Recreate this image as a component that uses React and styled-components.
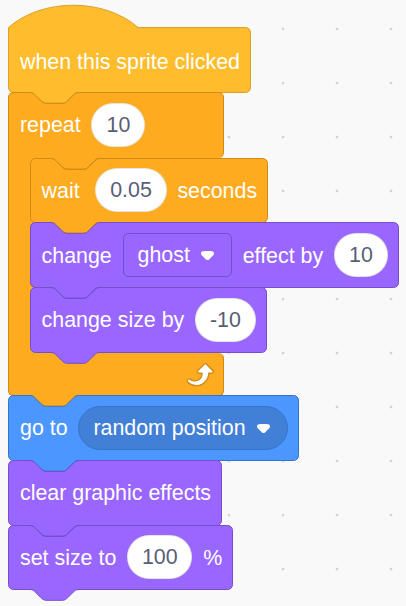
import styled, { createGlobalStyle } from "styled-components";

// scratch units -> px at this zoom
const S = 1.35;
const n = (v) => +(v * S).toFixed(2);

const COLORS = {
  events: { primary: "#FFBD2E", secondary: "#E6AC00", tertiary: "#D9A12A" },
  control: { primary: "#FFAB1F", secondary: "#EC9C13", tertiary: "#CF8B17" },
  looks: { primary: "#9966FF", secondary: "#855CD6", tertiary: "#774DCB" },
  motion: { primary: "#4C97FF", secondary: "#4280D7", tertiary: "#3373CC" },
};

const NOTCH = `c${n(2)},0 ${n(3)},${n(1)} ${n(4)},${n(2)} l${n(4)},${n(4)} c${n(1)},${n(1)} ${n(2)},${n(2)} ${n(4)},${n(2)} h${n(12)} c${n(2)},0 ${n(3)},${n(-1)} ${n(4)},${n(-2)} l${n(4)},${n(-4)} c${n(1)},${n(-1)} ${n(2)},${n(-2)} ${n(4)},${n(-2)}`;
const NOTCH_W = n(36);
const NOTCH_H = n(8);
const NOTCH_LEFT = n(16) - 1;

const GlobalStyle = createGlobalStyle`
  html, body {
    margin: 0;
    background: #f9f9f9;
  }
  body {
    font-family: "Liberation Sans", Arial, sans-serif;
  }
`;

const Workspace = styled.div`
  display: flex;
  min-height: 100vh;
  box-sizing: border-box;
  padding: 4px 0 0 8px;
  overflow: hidden;
  background-color: #f9f9f9;
  background-image: radial-gradient(circle, #d4d4d4 1.1px, transparent 1.7px);
  background-size: 54px 54px;
  background-position: 40px 2px;
`;

const Stack = styled.div`
  display: flex;
  flex-direction: column;
  align-items: flex-start;

  & > * + * {
    margin-top: -1px;
  }
`;

const Mouth = styled(Stack)`
  width: 6px;
  padding-left: ${NOTCH_LEFT}px;
  background: ${({ $c }) => $c.primary};
  border-left: 1px solid ${({ $c }) => $c.tertiary};
`;

const Block = styled.div`
  position: relative;
  box-sizing: border-box;
  display: flex;
  align-items: center;
  gap: ${n(8)}px;
  flex-shrink: 0;
  width: max-content;
  min-height: ${n(48) + 1}px;
  padding: ${({ $hat }) => ($hat ? "3px" : "0")} 10px 0 11px;
  background: ${({ $c }) => $c.primary};
  border: 1px solid ${({ $c }) => $c.tertiary};
  border-radius: ${({ $hat }) => ($hat ? `0 ${n(4)}px ${n(4)}px ${n(4)}px` : `${n(4)}px`)};
  color: #fff;
  white-space: nowrap;
`;

const HatWrap = styled.div`
  display: flex;
  flex-direction: column;
  align-items: flex-start;
`;

const HatCap = styled.svg`
  display: block;
  position: relative;
  z-index: 1;
  margin-bottom: -1px;
  overflow: visible;
`;

const CFrame = styled.div`
  display: flex;
  flex-direction: column;
  min-width: 216px;
`;

const CHead = styled.div`
  position: relative;
  box-sizing: border-box;
  display: flex;
  align-items: center;
  gap: ${n(8)}px;
  min-height: ${n(48) + 1}px;
  padding: 0 10px 0 11px;
  background: ${({ $c }) => $c.primary};
  border: 1px solid ${({ $c }) => $c.tertiary};
  border-bottom: none;
  border-radius: ${n(4)}px ${n(4)}px ${n(4)}px 0;
  color: #fff;
  white-space: nowrap;
`;

const CFoot = styled.div`
  position: relative;
  box-sizing: border-box;
  display: flex;
  align-items: center;
  justify-content: flex-end;
  height: 43px;
  padding-right: 8px;
  background: ${({ $c }) => $c.primary};
  border: 1px solid ${({ $c }) => $c.tertiary};
  border-top: none;
  border-radius: 0 ${n(4)}px ${n(4)}px ${n(4)}px;
`;

const Label = styled.span`
  min-width: ${({ $min }) => ($min ? `${$min}px` : "0")};
  padding-top: 2px;
  font-size: 21.4px;
  line-height: 1;
`;

const NumberField = styled.span`
  display: inline-flex;
  align-items: center;
  justify-content: center;
  box-sizing: border-box;
  height: 44px;
  min-width: ${n(40)}px;
  padding: 1px 13.8px 0;
  border-radius: 22px;
  background: #fff;
  border: 1px solid rgba(0, 0, 0, 0.1);
  color: #575e75;
  font-size: 21.4px;
  line-height: 1;
`;

// a menu that is a shadow block is drawn in the secondary colour and is round;
// a plain field dropdown keeps the block colour with square-ish corners
const Dropdown = styled.span`
  display: inline-flex;
  align-items: center;
  gap: 11px;
  box-sizing: border-box;
  height: 44px;
  padding: 1px 17px 0 14px;
  border-radius: ${({ $round }) => ($round ? "22px" : `${n(4)}px`)};
  background: ${({ $c, $round }) => ($round ? $c.secondary : $c.primary)};
  border: 1px solid ${({ $c }) => $c.tertiary};
  color: #fff;
  font-size: 21.4px;
  line-height: 1;
`;

const Shape = styled.svg`
  position: absolute;
  left: ${({ $left }) => $left}px;
  top: ${({ $top }) => ($top ? "-1px" : "100%")};
  z-index: ${({ $top }) => ($top ? 2 : 1)};
  overflow: visible;
  pointer-events: none;
`;

function Tab({ c, left = NOTCH_LEFT }) {
  return (
    <Shape width={NOTCH_W} height={NOTCH_H + 2} $left={left}>
      <path d={`M0,0.5 ${NOTCH} V0 H0 Z`} fill={c.primary} />
      <path d={`M0,0.5 ${NOTCH}`} fill="none" stroke={c.tertiary} />
    </Shape>
  );
}

function Notch({ c }) {
  return (
    <Shape width={NOTCH_W} height={NOTCH_H + 2} $left={NOTCH_LEFT} $top>
      <path d={`M0,0.5 ${NOTCH}`} fill="none" stroke={c.tertiary} />
    </Shape>
  );
}

function Arrow() {
  return (
    <svg width="13" height="9" viewBox="0 0 12.71 8.79">
      <path
        fill="#fff"
        d="M12.71,2.44A2.41,2.41,0,0,1,12,4.16L8.08,8.08a2.45,2.45,0,0,1-3.45,0L0.72,4.16A2.42,2.42,0,0,1,0,2.44,2.48,2.48,0,0,1,0.71,0.71C1,0.47,1.43,0,6.36,0S11.75,0.46,12,0.71A2.44,2.44,0,0,1,12.71,2.44Z"
      />
    </svg>
  );
}

function RepeatIcon() {
  return (
    <svg width="34" height="34" viewBox="0 0 24 24">
      <path
        fill="#cf8b17"
        d="M23.3 11c-.3.6-.9 1-1.5 1h-1.6c-.1 1.3-.5 2.5-1.1 3.6-.9 1.7-2.3 3.2-4.1 4.1-1.7.9-3.6 1.2-5.5.9-1.8-.3-3.5-1.1-4.9-2.3-.7-.7-.7-1.9 0-2.6.6-.6 1.6-.7 2.3-.2H7c.9.6 1.9.9 2.9.9s1.9-.3 2.7-.9c1.1-.8 1.8-2.1 1.8-3.5h-1.5c-.9 0-1.7-.7-1.7-1.7 0-.4.2-.9.5-1.2l4.4-4.4c.7-.6 1.7-.6 2.4 0L23 9.2c.5.5.6 1.2.3 1.8z"
      />
      <path
        fill="#fff"
        d="M21.8 11h-2.6c0 1.5-.3 2.9-1 4.2-.8 1.6-2.1 2.8-3.7 3.6-1.5.8-3.3 1.1-4.9.8-1.6-.2-3.2-1-4.4-2.1-.4-.3-.4-.9-.1-1.2.3-.4.9-.4 1.2-.1 1 .7 2.2 1.1 3.4 1.1s2.3-.3 3.3-1c.9-.6 1.6-1.5 2-2.6.3-.9.4-1.8.2-2.8h-2.4c-.4 0-.7-.3-.7-.7 0-.2.1-.3.2-.4l4.4-4.4c.3-.3.7-.3.9 0L22 9.8c.3.3.4.6.3.9s-.3.3-.5.3z"
      />
    </svg>
  );
}

function HatBlock({ c, children }) {
  return (
    <HatWrap>
      <HatCap width="131" height="24">
        <path d="M0.5,24 V23.5 c33.75,-29.7 95.85,-29.7 129.6,0 V24 Z" fill={c.primary} />
        <path d="M0.5,23.5 c33.75,-29.7 95.85,-29.7 129.6,0" fill="none" stroke={c.tertiary} />
      </HatCap>
      <Block $c={c} $hat>
        {children}
        <Tab c={c} />
      </Block>
    </HatWrap>
  );
}

function CommandBlock({ c, children }) {
  return (
    <Block $c={c}>
      <Notch c={c} />
      {children}
      <Tab c={c} />
    </Block>
  );
}

function CBlock({ c, head, children }) {
  return (
    <CFrame>
      <CHead $c={c}>
        <Notch c={c} />
        {head}
        <Tab c={c} left={n(16) * 2 - 1} />
      </CHead>
      <Mouth $c={c}>{children}</Mouth>
      <CFoot $c={c}>
        <RepeatIcon />
        <Tab c={c} />
      </CFoot>
    </CFrame>
  );
}

export default function App() {
  const { events, control, looks, motion } = COLORS;

  return (
    <>
      <GlobalStyle />
      <Workspace>
        <Stack>
          <HatBlock c={events}>
            <Label>when this sprite clicked</Label>
          </HatBlock>
          <CBlock
            c={control}
            head={
              <>
                <Label>repeat</Label>
                <NumberField>10</NumberField>
              </>
            }
          >
            <CommandBlock c={control}>
              <Label $min={43}>wait</Label>
              <NumberField>0.05</NumberField>
              <Label>seconds</Label>
            </CommandBlock>
            <CommandBlock c={looks}>
              <Label>change</Label>
              <Dropdown $c={looks}>
                ghost
                <Arrow />
              </Dropdown>
              <Label>effect by</Label>
              <NumberField>10</NumberField>
            </CommandBlock>
            <CommandBlock c={looks}>
              <Label>change size by</Label>
              <NumberField>-10</NumberField>
            </CommandBlock>
          </CBlock>
          <CommandBlock c={motion}>
            <Label>go to</Label>
            <Dropdown $c={motion} $round>
              random position
              <Arrow />
            </Dropdown>
          </CommandBlock>
          <CommandBlock c={looks}>
            <Label>clear graphic effects</Label>
          </CommandBlock>
          <CommandBlock c={looks}>
            <Label>set size to</Label>
            <NumberField>100</NumberField>
            <Label>%</Label>
          </CommandBlock>
        </Stack>
      </Workspace>
    </>
  );
}
